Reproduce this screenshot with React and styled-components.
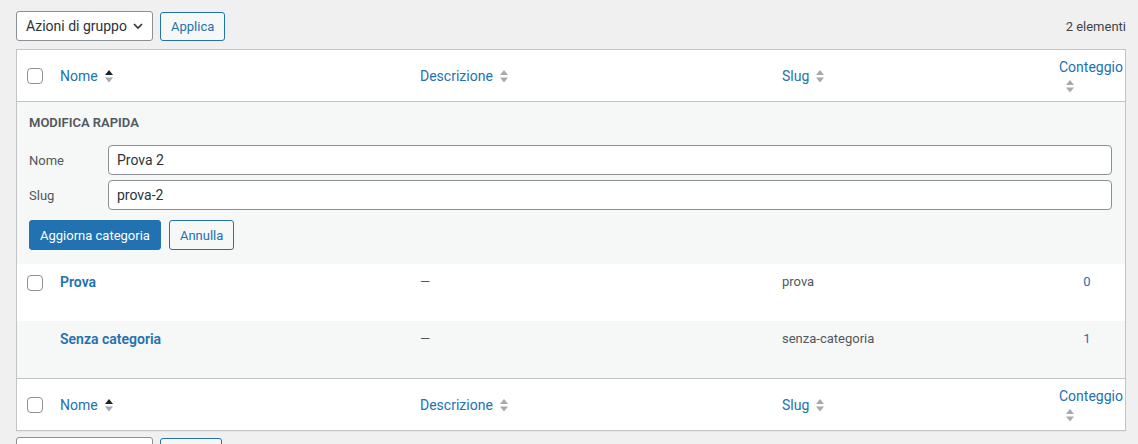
import styled, { createGlobalStyle } from "styled-components";

const GlobalStyle = createGlobalStyle`
  html, body { margin: 0; padding: 0; background: #f0f0f1; overflow: hidden; }
  body {
    font-family: "Segoe UI", Roboto, "Open Sans", sans-serif;
    color: #3c434a;
    font-size: 13px;
  }
  * { box-sizing: border-box; }
`;

const Page = styled.div`
  height: 444px;
  padding: 11px 12px 0 16px;
`;

const TableNav = styled.div`
  display: flex;
  align-items: center;
  gap: 7px;
  height: 30px;
  margin: ${(p) => (p.bottom ? "6px 0 4px" : "0 0 8px")};
`;

const Select = styled.div`
  display: flex;
  align-items: center;
  justify-content: space-between;
  width: 137px;
  height: 30px;
  padding: 0 8px 0 9px;
  border: 1px solid #8c8f94;
  border-radius: 3px;
  background: #fff;
  color: #2c3338;
  font-size: 14px;
`;

const Button = styled.button`
  height: ${(p) => (p.tall ? "30px" : "29px")};
  min-width: ${(p) => p.w || 0}px;
  padding: 0 10px;
  border-radius: 3px;
  font-family: inherit;
  font-size: 13px;
  border: 1px solid #2271b1;
  background: ${(p) => (p.primary ? "#2271b1" : "#f6f7f7")};
  color: ${(p) => (p.primary ? "#fff" : "#2271b1")};
  cursor: pointer;
`;

const Count = styled.span`
  margin-left: auto;
  color: #3c434a;
  font-size: 13px;
`;

const Table = styled.div`
  border: 1px solid #c3c4c7;
  background: #fff;
  box-shadow: 0 1px 1px rgba(0, 0, 0, 0.04);
`;

const Row = styled.div`
  display: grid;
  grid-template-columns: 33px 360px 362px 277px 76px;
  background: ${(p) => (p.alt ? "#f6f7f7" : "#fff")};
  border-top: ${(p) => (p.lineTop ? "1px solid #c3c4c7" : "none")};
  border-bottom: ${(p) => (p.lineBottom ? "1px solid #c3c4c7" : "none")};
  height: ${(p) => p.h}px;
`;

const Cell = styled.div`
  padding: ${(p) => (p.head ? "0 10px" : "8px 10px 0")};
  display: flex;
  align-items: ${(p) => (p.head ? "center" : "flex-start")};
  justify-content: ${(p) => (p.center ? "center" : "flex-start")};
  line-height: 20px;
  font-size: ${(p) => (p.head || p.bold ? "14px" : "13px")};
  color: ${(p) => (p.link ? "#2271b1" : "#50575e")};
  font-weight: ${(p) => (p.bold ? 600 : 400)};
  white-space: nowrap;
  overflow: ${(p) => (p.clip ? "visible" : "hidden")};
`;

const CheckCell = styled.div`
  padding: ${(p) => (p.head ? "0 0 0 10px" : "11px 0 0 10px")};
  display: flex;
  align-items: ${(p) => (p.head ? "center" : "flex-start")};
`;

const Check = styled.span`
  display: block;
  width: 16px;
  height: 16px;
  border: 1px solid #8c8f94;
  border-radius: 4px;
  background: #fff;
`;

const SortLink = styled.span`
  display: flex;
  align-items: center;
  gap: 6px;
  color: #2271b1;
`;

const StackLink = styled.span`
  display: flex;
  flex-direction: column;
  align-items: flex-start;
  color: #2271b1;
  svg { margin: 1px 0 0 6px; }
`;

const QuickEdit = styled.div`
  display: flex;
  flex-direction: column;
  background: #f6f7f7;
  padding: 11px 13px 14px 12px;
`;

const Legend = styled.div`
  font-size: 13px;
  font-weight: 600;
  color: #50575e;
  text-transform: uppercase;
  line-height: 20px;
  margin-bottom: 12px;
`;

const Field = styled.label`
  display: flex;
  align-items: center;
  height: 30px;
  margin-bottom: 5px;
`;

const FieldLabel = styled.span`
  width: 79px;
  font-size: 13px;
  color: #50575e;
`;

const Input = styled.input`
  flex: 1;
  height: 30px;
  padding: 0 8px;
  border: 1px solid #8c8f94;
  border-radius: 4px;
  background: #fff;
  font-family: inherit;
  font-size: 14px;
  color: #2c3338;
  outline: none;
`;

const Actions = styled.div`
  display: flex;
  gap: 8px;
  height: 30px;
  margin-top: 5px;
`;

const Sort = ({ active }) => (
  <svg width="10" height="16" viewBox="0 0 10 16">
    <polygon points="1,7 5,2 9,7" fill={active ? "#1d2327" : "#a7aaad"} />
    <polygon points="1,9.5 9,9.5 5,14.5" fill="#a7aaad" />
  </svg>
);

const Chevron = () => (
  <svg width="12" height="12" viewBox="0 0 12 12">
    <path d="M2 4l4 4 4-4" fill="none" stroke="#2c3338" strokeWidth="1.6" />
  </svg>
);

const HeadRow = ({ top }) => (
  <Row h={52} lineBottom={top} lineTop={!top}>
    <CheckCell head>
      <Check />
    </CheckCell>
    <Cell head>
      <SortLink>Nome <Sort active /></SortLink>
    </Cell>
    <Cell head>
      <SortLink>Descrizione <Sort /></SortLink>
    </Cell>
    <Cell head>
      <SortLink>Slug <Sort /></SortLink>
    </Cell>
    <Cell head clip>
      <StackLink>Conteggio <Sort /></StackLink>
    </Cell>
  </Row>
);

const terms = [
  { name: "Prova", slug: "prova", count: 0, check: true },
  { name: "Senza categoria", slug: "senza-categoria", count: 1, check: false },
];

export default function App() {
  return (
    <Page>
      <GlobalStyle />
      <TableNav>
        <Select>
          Azioni di gruppo <Chevron />
        </Select>
        <Button>Applica</Button>
        <Count>2 elementi</Count>
      </TableNav>
      <Table>
        <HeadRow top />
        <QuickEdit>
          <Legend>Modifica rapida</Legend>
          <Field>
            <FieldLabel>Nome</FieldLabel>
            <Input defaultValue="Prova 2" />
          </Field>
          <Field>
            <FieldLabel>Slug</FieldLabel>
            <Input defaultValue="prova-2" />
          </Field>
          <Actions>
            <Button primary tall>Aggiorna categoria</Button>
            <Button tall>Annulla</Button>
          </Actions>
        </QuickEdit>
        {terms.map((t, i) => (
          <Row key={t.slug} h={57} alt={i % 2 === 1}>
            <CheckCell>{t.check && <Check />}</CheckCell>
            <Cell link bold>{t.name}</Cell>
            <Cell>—</Cell>
            <Cell>{t.slug}</Cell>
            <Cell link center>{t.count}</Cell>
          </Row>
        ))}
        <HeadRow />
      </Table>
      <TableNav bottom>
        <Select />
        <Button w={62} />
      </TableNav>
    </Page>
  );
}
